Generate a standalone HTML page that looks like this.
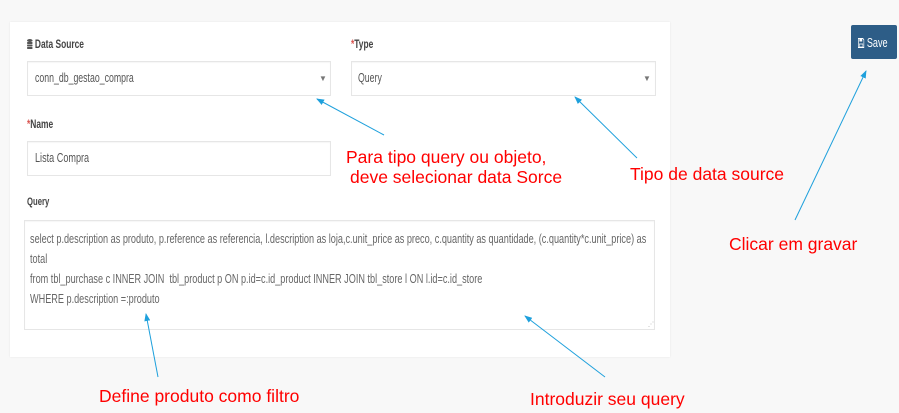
<!DOCTYPE html>
<html><head><meta charset="utf-8">
<style>
*{margin:0;padding:0;box-sizing:border-box}
body{width:899px;height:413px;background:#f8f8f8;position:relative;overflow:hidden;font-family:"Liberation Sans",sans-serif}
.card{position:absolute;left:10px;top:22px;width:660px;height:335px;background:#fff;box-shadow:0 0 2px rgba(0,0,0,.08)}
.c{position:absolute;white-space:nowrap;transform:scaleX(.7);transform-origin:left center}
.lbl{font-size:12px;font-weight:bold;color:#444}
.box{position:absolute;background:#fff;border:1px solid #e6e6e6;box-shadow:inset 0 1px 1px rgba(0,0,0,.04)}
.val{font-size:12.5px;color:#555}
.caret{position:absolute;font-size:8px;color:#777}
.red{position:absolute;color:#f00;font-size:17.5px;white-space:nowrap}
.q{font-size:12.5px;color:#666;line-height:20px;transform:scaleX(.73)}
.save{position:absolute;left:851px;top:25px;width:46px;height:34px;background:#2d5d87;border-radius:2px}
</style></head><body>
<div class="card"></div>
<div class="c lbl" style="left:27px;top:37px"><svg width="8" height="10" viewBox="0 0 8 10" style="vertical-align:-1px"><ellipse cx="4" cy="1.5" rx="4" ry="1.5" fill="#555"/><rect x="0" y="3" width="8" height="2" rx="1" fill="#555"/><rect x="0" y="5.5" width="8" height="2" rx="1" fill="#555"/><rect x="0" y="8" width="8" height="2" rx="1" fill="#555"/></svg> Data Source</div>
<div class="box" style="left:27px;top:61px;width:304px;height:35px"></div>
<div class="c val" style="left:35px;top:71px">conn_db_gestao_compra</div>
<div class="caret" style="left:319px;top:74px">▼</div>
<div class="c lbl" style="left:351px;top:37px"><span style="color:#d9534f">*</span>Type</div>
<div class="box" style="left:351px;top:61px;width:305px;height:35px"></div>
<div class="c val" style="left:358px;top:71px">Query</div>
<div class="caret" style="left:643px;top:74px">▼</div>
<div class="c lbl" style="left:27px;top:117px"><span style="color:#d9534f">*</span>Name</div>
<div class="box" style="left:27px;top:141px;width:304px;height:35px"></div>
<div class="c val" style="left:35px;top:150px;font-size:13px">Lista Compra</div>
<div class="c lbl" style="left:27px;top:196px;font-size:11px">Query</div>
<div class="box" style="left:24px;top:220px;width:631px;height:110px"></div>
<div class="c q" style="left:30px;top:229px">select p.description as produto, p.reference as referencia, l.description as loja,c.unit_price as preco, c.quantity as quantidade, (c.quantity*c.unit_price) as<br>total<br>from tbl_purchase c INNER JOIN &nbsp;tbl_product p ON p.id=c.id_product INNER JOIN tbl_store l ON l.id=c.id_store<br>WHERE p.description =:produto</div>
<div style="position:absolute;left:648px;top:321px;font-size:6px;color:#aaa">⋰</div>
<div class="save"></div>
<div class="c" style="left:858px;top:35px;color:#fff;font-size:13px"><svg width="9" height="10" viewBox="0 0 9 10" style="vertical-align:-1px"><path d="M0.5 0.5h6.5l1.5 1.5v7.5h-8z" fill="none" stroke="#fff"/><rect x="2" y="1" width="4" height="2.5" fill="#fff"/><rect x="2" y="6" width="5" height="3" fill="none" stroke="#fff" stroke-width=".8"/></svg> Save</div>
<svg width="899" height="413" style="position:absolute;left:0;top:0">
<defs><marker id="a" markerWidth="8" markerHeight="6" refX="7" refY="3" orient="auto"><path d="M0,0 L8,3 L0,6z" fill="#1ea0dc"/></marker></defs>
<g stroke="#1ea0dc" stroke-width="1" marker-end="url(#a)">
<line x1="384" y1="135" x2="317" y2="99"/>
<line x1="637" y1="158" x2="575" y2="97"/>
<line x1="795" y1="220" x2="866" y2="71"/>
<line x1="158" y1="377" x2="146" y2="314"/>
<line x1="605" y1="377" x2="525" y2="316"/>
</g></svg>
<div class="red" style="left:346px;top:147px">Para tipo query ou objeto,</div>
<div class="red" style="left:350px;top:167px">deve selecionar data Sorce</div>
<div class="red" style="left:630px;top:164px">Tipo de data source</div>
<div class="red" style="left:729px;top:234px">Clicar em gravar</div>
<div class="red" style="left:99px;top:386px">Define produto como filtro</div>
<div class="red" style="left:530px;top:389px">Introduzir seu query</div>
</body></html>
